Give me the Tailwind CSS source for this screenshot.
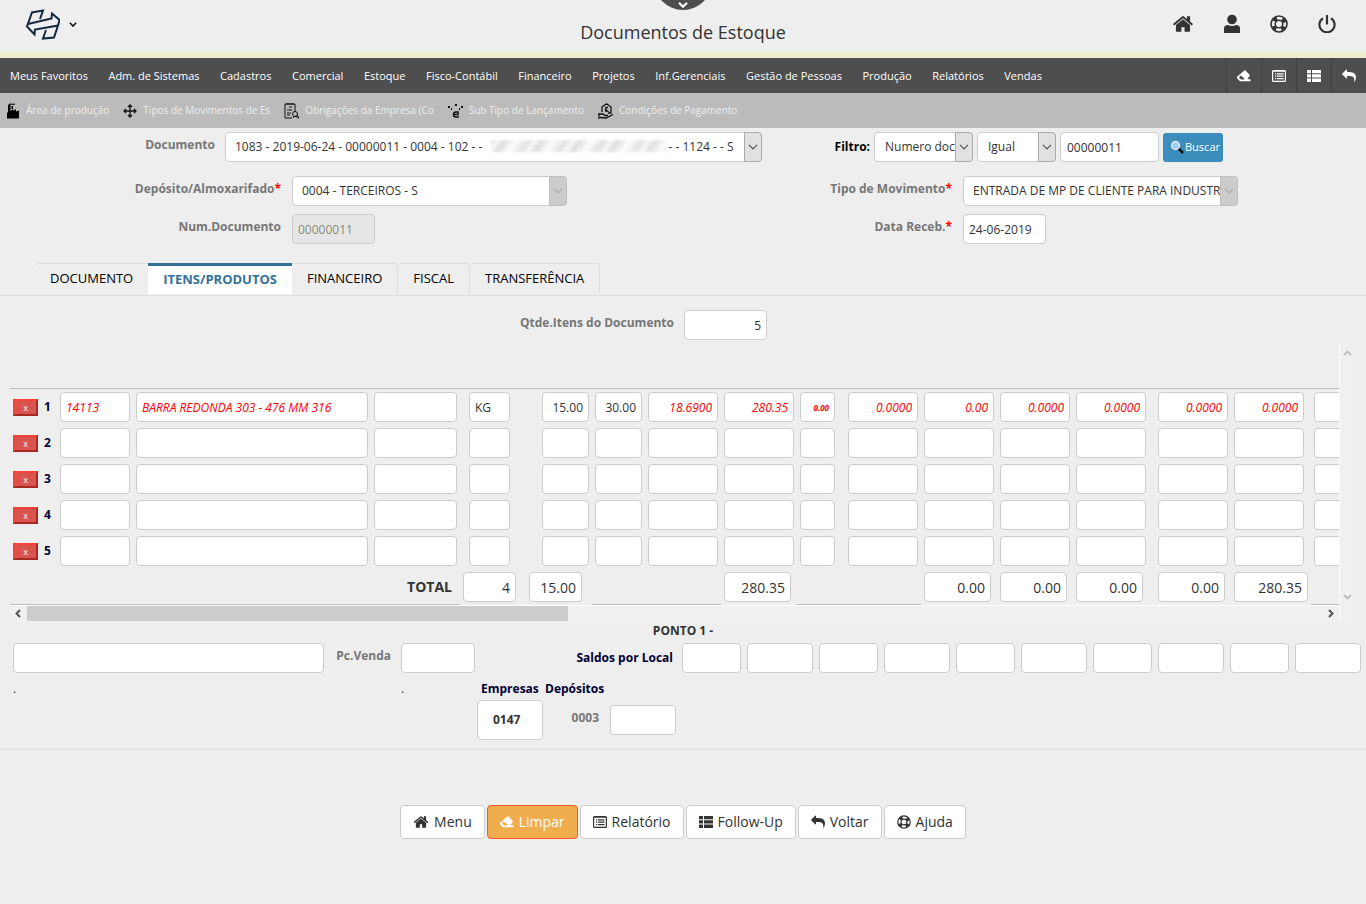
<!DOCTYPE html>
<html lang="pt-BR">
    <head>
        <meta charset="UTF-8" />
        <meta name="viewport" content="width=device-width, initial-scale=1" />
        <title>Documentos de Estoque</title>
        <script src="https://cdn.jsdelivr.net/npm/@tailwindcss/browser@4"></script>
    </head>
    <body class="min-h-screen overflow-x-hidden bg-[#eeeeee] font-['Open_Sans',sans-serif] text-xs text-[#333]">
        <!-- Icon sprite -->
        <svg class="hidden">
            <symbol id="i-home" viewBox="0 0 1792 1792">
                <path d="M1472 992v480q0 26-19 45t-45 19h-384v-384h-256v384h-384q-26 0-45-19t-19-45v-480q0-1 .5-3t.5-3l575-474 575 474q1 2 1 6zm223-69l-62 74q-8 9-21 11h-3q-13 0-21-7l-692-577-692 577q-12 8-24 7-13-2-21-11l-62-74q-8-10-7-23.5t11-21.5l719-599q32-26 76-26t76 26l244 204v-195q0-14 9-23t23-9h192q14 0 23 9t9 23v408l219 182q10 8 11 21.5t-7 23.5z" />
            </symbol>
            <symbol id="i-user" viewBox="0 0 18 20">
                <circle cx="9" cy="5.500" r="4.800" />
                <path d="M1 19v-4.500q0-3.500 4-3.500 4 2 8 0 4 0 4 3.500v4.500z" />
            </symbol>
            <symbol id="i-ring" viewBox="0 0 18 18">
                <g fill="none" stroke="currentColor">
                    <circle cx="9" cy="9" r="8" stroke-width="1.600" />
                    <circle cx="9" cy="9" r="3.800" stroke-width="1.500" />
                    <circle cx="9" cy="9" r="6" stroke-width="4" stroke-dasharray="4 5.425" stroke-dashoffset="-2.710" />
                </g>
            </symbol>
            <symbol id="i-power" viewBox="0 0 18 18">
                <path d="M5 3.200a7.600 7.600 0 1 0 8 0M9 0v9.500" fill="none" stroke="currentColor" stroke-width="2.200" />
            </symbol>
            <symbol id="i-eraser" viewBox="0 0 14 12">
                <path fill-rule="evenodd" d="M8 0l5 5.200-2.700 4H13.500v2H3L0 8.200V6.800zM3.600 5.600L2 7.500l2 1.900h3L7.600 8.600z" />
            </symbol>
            <symbol id="i-form" viewBox="0 0 14 12">
                <path fill-rule="evenodd" d="M1.500 0h11Q14 0 14 1.500v9q0 1.500-1.500 1.500h-11Q0 12 0 10.500v-9Q0 0 1.500 0zM1.200 1.800v9h11.600v-9z" />
                <path d="M3 3.200h1.200v1.200H3zM5 3.200h6.500v1.200H5zM3 5.600h1.200v1.200H3zM5 5.600h6.500v1.200H5zM3 8h1.200v1.200H3zM5 8h6.500v1.200H5z" />
            </symbol>
            <symbol id="i-list" viewBox="0 0 14 12">
                <path d="M0 0h4v3.300H0zM5 0h9v3.300H5zM0 4.300h4v3.300H0zM5 4.300h9v3.300H5zM0 8.600h4V12H0zM5 8.600h9V12H5z" />
            </symbol>
            <symbol id="i-reply" viewBox="0 0 1792 1792">
                <path d="M1792 1120q0 166-127 451-3 7-10.500 24t-13.500 30-13 22q-12 17-28 17-15 0-23.500-10t-8.500-25q0-9 2.500-26.500t2.500-23.500q5-68 5-123 0-101-17.500-181t-48.500-138.500-80-101-105.500-69.500-133-42.500-154-21.500-175.500-6h-224v256q0 26-19 45t-45 19-45-19l-512-512q-19-19-19-45t19-45l512-512q19-19 45-19t45 19 19 45v256h224q713 0 875 403 53 134 53 333z" />
            </symbol>
            <symbol id="i-down" viewBox="0 0 10 6">
                <path d="M1 .8l4 4 4-4" fill="none" stroke="currentColor" stroke-width="1.200" />
            </symbol>
        </svg>

        <header class="relative flex h-[58px] items-center justify-between border-b-6 border-[#eeeed0] pb-1">
            <button class="ml-[25px] flex items-center gap-[9px]" aria-label="Empresa">
                <svg class="h-8 w-[35px]" viewBox="0 0 35 32" fill="none" stroke="#14293d" stroke-width="2">
                    <path d="M15 11l3-8.500L7 4.500 2 18.500l7.500 8 .5-5 23-4L34.500 12 27 5.500l-.5 5L3 16M33 17.500l-4 12-11 1L21 22" />
                </svg>
                <svg class="h-[5px] w-2 text-black" viewBox="0 0 8 5"><path d="M.8.800L4 4 7.200.800" fill="none" stroke="currentColor" stroke-width="1.500" /></svg>
            </button>
            <button class="absolute -top-12 left-1/2 size-[58px] -translate-x-1/2 rounded-full bg-[#4e4e4e]" aria-label="Mostrar">
                <svg class="mx-auto mt-12 h-[6px] w-[10px] text-white" viewBox="0 0 10 6"><path d="M1 .800l4 4 4-4" fill="none" stroke="currentColor" stroke-width="2" /></svg>
            </button>
            <h1 class="absolute inset-x-0 top-5 text-center text-lg/6">Documentos de Estoque</h1>
            <nav class="mr-[30px] flex items-center gap-7" aria-label="Atalhos">
                <a href="#" aria-label="Menu"><svg class="size-[22px]" fill="currentColor"><use href="#i-home" /></svg></a>
                <a href="#" aria-label="Usuário"><svg class="size-5" fill="currentColor"><use href="#i-user" /></svg></a>
                <a href="#" aria-label="Ajuda"><svg class="size-[18px]" fill="currentColor"><use href="#i-ring" /></svg></a>
                <a href="#" aria-label="Sair" class="ml-[2px]"><svg class="size-[18px]" fill="currentColor"><use href="#i-power" /></svg></a>
            </nav>
        </header>

        <nav class="flex h-[35px] items-center justify-between bg-[#4e4e4e] text-white" aria-label="Principal">
            <div class="ml-[10px] flex w-[1032px] justify-between pt-[2px] text-[11px] whitespace-nowrap">
                <a href="#">Meus Favoritos</a>
                <a href="#">Adm. de Sistemas</a>
                <a href="#">Cadastros</a>
                <a href="#">Comercial</a>
                <a href="#">Estoque</a>
                <a href="#">Fisco-Contábil</a>
                <a href="#">Financeiro</a>
                <a href="#">Projetos</a>
                <a href="#">Inf.Gerenciais</a>
                <a href="#">Gestão de Pessoas</a>
                <a href="#">Produção</a>
                <a href="#">Relatórios</a>
                <a href="#">Vendas</a>
            </div>
            <div class="flex h-full">
                <button class="flex w-[35px] items-center justify-center border-l border-[#404040]" aria-label="Limpar"><svg class="h-3 w-[14px]" fill="currentColor"><use href="#i-eraser" /></svg></button>
                <button class="flex w-[35px] items-center justify-center border-l border-[#404040]" aria-label="Relatório"><svg class="h-3 w-[14px]" fill="currentColor"><use href="#i-form" /></svg></button>
                <button class="flex w-[35px] items-center justify-center border-l border-[#404040]" aria-label="Follow-Up"><svg class="h-3 w-[14px]" fill="currentColor"><use href="#i-list" /></svg></button>
                <button class="flex w-[35px] items-center justify-center border-l border-[#404040]" aria-label="Voltar"><svg class="size-[14px]" fill="currentColor"><use href="#i-reply" /></svg></button>
            </div>
        </nav>

        <nav class="flex h-[35px] items-center gap-[14px] bg-[#bbb] pl-[6px] text-[10px] whitespace-nowrap text-[#eee]" aria-label="Favoritos">
            <a href="#" class="flex items-center gap-[6px]">
                <svg class="h-4 w-[14px]" viewBox="0 0 14 16" fill="#000"><path d="M1 15.500V9.500h1V2h2.500v6l3-2v2l2.500-2v2.500l3-1v8zM2 1.500Q4 0 6 .8h3v1H4z" /><path d="M5.500 3H7v3H5.500z" /></svg>
                Área de produção
            </a>
            <a href="#" class="flex items-center gap-[6px]">
                <svg class="size-[14px]" viewBox="0 0 14 14" fill="none" stroke="#111" stroke-width="1.300"><path d="M7 1v12M1 7h12M5 3l2-2 2 2M5 11l2 2 2-2M3 5L1 7l2 2M11 5l2 2-2 2" /></svg>
                Tipos de Movimentos de Es
            </a>
            <a href="#" class="flex items-center gap-[5px]">
                <svg class="size-4" viewBox="0 0 16 16" fill="none" stroke="#111"><path d="M1 1h10v8M1 1v14h7M3 0v2M5 0v2M7 0v2M9 0v2M3 7h5M3 10h4M3 12h3" /><circle cx="11" cy="11" r="2.500" /><path d="M9 15l2-2 4 2M13 12l2 3M5 4h3" /></svg>
                Obrigações da Empresa (Co
            </a>
            <a href="#" class="flex items-center gap-[5px]">
                <svg class="size-4" viewBox="0 0 16 16" fill="#111"><path d="M0 3h2v2H0zM3 5h1v2H3zM7 1h2v2H7zM11 5h1v2h-1zM13 3h2v2h-2z" /><path d="M11 14H8q-2.500 0-2.500-2.500T8 9h2v2.500H6" fill="none" stroke="#111" stroke-width="1.500" /></svg>
                Sub Tipo de Lançamento
            </a>
            <a href="#" class="flex items-center gap-[5px]">
                <svg class="size-4" viewBox="0 0 16 16" fill="none" stroke="#111" stroke-width="1.300"><path d="M4 9V4l4.500-3.200L13 4v6h-3M10 4.500H8L7.500 6.500 9.500 8H7M1 10v6M1 11h4l2 1.500h3M2 14.500l6 .5 7-3.500" /></svg>
                Condições de Pagamento
            </a>
        </nav>

        <main>
            <form class="pt-1" onsubmit="return false">
                <!-- Document search -->
                <div class="flex h-[30px] items-center justify-between pr-[143px]">
                    <div class="flex items-center gap-[10px]">
                        <label for="documento" class="w-[215px] pb-1 text-right font-bold text-[#777]">Documento</label>
                        <div class="relative">
                            <select id="documento" class="h-[30px] w-[537px] appearance-none rounded-sm border border-[#ccc] bg-white pl-[9px]">
                                <option>1083 - 2019-06-24 - 00000011 - 0004 - 102 - -&emsp;&emsp;&emsp;&emsp;&emsp;&emsp;&emsp;&emsp;&emsp;&emsp;&emsp;&emsp;&emsp;&emsp;&emsp;&nbsp; - - 1124 - - S</option>
                            </select>
                            <span class="pointer-events-none absolute top-2 left-[266px] h-3 w-[176px] bg-[repeating-linear-gradient(125deg,#e2e2e2_0px,#f8f8f8_6px,#dedede_11px,#fdfdfd_21px,#e8e8e8_29px,#e2e2e2_31px)] blur-[1px]"></span>
                            <span class="pointer-events-none absolute inset-y-0 right-0 flex w-[18px] items-center justify-center rounded-r-sm border border-[#aaa] bg-[#e1e1e1] text-[#555]"><svg class="h-[6px] w-[10px]"><use href="#i-down" /></svg></span>
                        </div>
                    </div>
                    <div class="flex items-center gap-1">
                        <label for="filtro" class="font-bold text-black">Filtro:</label>
                        <div class="relative">
                            <select id="filtro" class="h-[30px] w-[99px] appearance-none rounded-sm border border-[#ccc] bg-white pl-[10px]"><option>Numero documento</option></select>
                            <span class="pointer-events-none absolute inset-y-0 right-0 flex w-[18px] items-center justify-center rounded-r-sm border border-[#aaa] bg-[#e1e1e1] text-[#555]"><svg class="h-[6px] w-[10px]"><use href="#i-down" /></svg></span>
                        </div>
                        <div class="relative">
                            <select aria-label="Operador" class="h-[30px] w-[79px] appearance-none rounded-sm border border-[#ccc] bg-white pl-[10px]"><option>Igual</option></select>
                            <span class="pointer-events-none absolute inset-y-0 right-0 flex w-[18px] items-center justify-center rounded-r-sm border border-[#aaa] bg-[#e1e1e1] text-[#555]"><svg class="h-[6px] w-[10px]"><use href="#i-down" /></svg></span>
                        </div>
                        <input aria-label="Valor" value="00000011" class="h-[30px] w-[99px] rounded-sm border border-[#ccc] bg-white px-[6px]" />
                        <button class="flex h-[29px] w-[60px] items-center justify-end gap-px rounded-[3px] bg-[#3c8dbc] pr-[3px] text-[11px] text-white">
                            <svg class="size-[14px]" viewBox="0 0 14 14"><path d="M8 8l5 5" stroke="#111" stroke-width="2.500" /><circle cx="5.500" cy="5.500" r="4" fill="#9fd0f5" stroke="#dbe9f5" stroke-width="1.500" /></svg>
                            Buscar
                        </button>
                    </div>
                </div>

                <div class="mt-[14px] grid grid-cols-2 gap-y-2">
                    <div class="flex items-center gap-[11px]">
                        <label for="deposito" class="w-[281px] pb-1 text-right font-bold text-[#777]">Depósito/Almoxarifado<span class="text-[#f00]">*</span></label>
                        <div class="relative">
                            <select id="deposito" class="h-[30px] w-[275px] appearance-none rounded-sm border border-[#ccc] bg-white pl-[9px]"><option>0004 - TERCEIROS - S</option></select>
                            <span class="pointer-events-none absolute inset-y-0 right-0 flex w-[18px] items-center justify-center rounded-r-sm border border-[#bfbfbf] bg-[#ccc] text-[#aaa]"><svg class="h-[6px] w-[10px]"><use href="#i-down" /></svg></span>
                        </div>
                    </div>
                    <div class="flex items-center gap-[11px]">
                        <label for="tipo" class="w-[269px] pb-1 text-right font-bold text-[#777]">Tipo de Movimento<span class="text-[#f00]">*</span></label>
                        <div class="relative">
                            <select id="tipo" class="h-[30px] w-[275px] appearance-none rounded-sm border border-[#ccc] bg-white pl-[9px]"><option>ENTRADA DE MP DE CLIENTE PARA INDUSTRIALIZAÇÃO</option></select>
                            <span class="pointer-events-none absolute inset-y-0 right-0 flex w-[18px] items-center justify-center rounded-r-sm border border-[#bfbfbf] bg-[#ccc] text-[#aaa]"><svg class="h-[6px] w-[10px]"><use href="#i-down" /></svg></span>
                        </div>
                    </div>
                    <div class="flex items-center gap-[11px]">
                        <label for="numero" class="w-[281px] pb-1 text-right font-bold text-[#777]">Num.Documento</label>
                        <input id="numero" value="00000011" disabled class="h-[30px] w-[83px] rounded-sm border border-[#ccc] bg-[#e6e6e6] px-[5px] text-[#8a8a7c]" />
                    </div>
                    <div class="flex items-center gap-[11px]">
                        <label for="data" class="w-[269px] pb-1 text-right font-bold text-[#777]">Data Receb.<span class="text-[#f00]">*</span></label>
                        <input id="data" value="24-06-2019" class="h-[30px] w-[83px] rounded-sm border border-[#ccc] bg-white px-[5px]" />
                    </div>
                </div>

                <!-- Tabs -->
                <div role="tablist" class="mt-[19px] flex h-[33px] border-b border-[#ddd] pb-px pl-[35px] text-[13px] text-black">
                    <button type="button" role="tab" class="rounded-tl-sm border-t border-[#ddd] px-[15px]">DOCUMENTO</button>
                    <button type="button" role="tab" aria-selected="true" class="border-t-3 border-[#337199] bg-white px-[15px] font-bold text-[#337199]">ITENS/PRODUTOS</button>
                    <button type="button" role="tab" class="rounded-tr-sm border-t border-r border-[#ddd] px-[15px]">FINANCEIRO</button>
                    <button type="button" role="tab" class="rounded-t-sm border-t border-r border-[#ddd] px-[15px]">FISCAL</button>
                    <button type="button" role="tab" class="rounded-t-sm border-t border-r border-[#ddd] px-[15px]">TRANSFERÊNCIA</button>
                </div>

                <div class="mt-[14px] flex items-center gap-[10px]">
                    <label for="qtde" class="w-[674px] pb-1 text-right font-bold text-[#777]">Qtde.Itens do Documento</label>
                    <input id="qtde" value="5" class="h-[30px] w-[83px] rounded-sm border border-[#ccc] bg-white px-[5px] text-right" />
                </div>

                <!-- Items grid with its scrollbars -->
                <div class="mx-[10px] mt-1 flex">
                    <div class="min-w-0 flex-1">
                        <div class="overflow-hidden">
                            <table class="w-[1392px] table-fixed border-separate border-spacing-0">
                                <colgroup>
                                    <col class="w-[47px]" />
                                    <col class="w-[76px]" />
                                    <col class="w-[238px]" />
                                    <col class="w-[89px]" />
                                    <col class="w-[66px]" />
                                    <col class="w-[66px]" />
                                    <col class="w-[53px]" />
                                    <col class="w-[76px]" />
                                    <col class="w-[76px]" />
                                    <col class="w-[48px]" />
                                    <col class="w-[76px]" />
                                    <col class="w-[76px]" />
                                    <col class="w-[76px]" />
                                    <col class="w-[82px]" />
                                    <col class="w-[76px]" />
                                    <col class="w-[80px]" />
                                    <col class="w-[91px]" />
                                </colgroup>
                                <thead>
                                    <tr class="h-[45px]"><td colspan="17" class="border-b border-[#bbb] p-0"></td></tr>
                                </thead>
                                <tbody id="itens"></tbody>
                                <tfoot>
                                    <tr id="totais" class="h-9"></tr>
                                </tfoot>
                            </table>
                        </div>
                        <div class="flex h-[17px] items-start border-t border-white bg-[#f0f0f0] text-[#555]">
                            <svg class="h-[15px] w-[17px]" viewBox="0 0 17 15"><path d="M10 4L6.500 7.500 10 11" fill="none" stroke="currentColor" stroke-width="2" /></svg>
                            <div class="h-[15px] w-[541px] bg-[#ccc]"></div>
                            <svg class="ml-auto h-[15px] w-[17px]" viewBox="0 0 17 15"><path d="M7 4l3.500 3.500L7 11" fill="none" stroke="currentColor" stroke-width="2" /></svg>
                        </div>
                    </div>
                    <div class="flex w-[17px] flex-col justify-between border-l border-white bg-[#f0f0f0] pt-[6px] pb-[22px] pl-[3px] text-[#bbb]">
                        <svg class="h-[6px] w-[9px]" viewBox="0 0 9 6"><path d="M1 5l3.500-3.500L8 5" fill="none" stroke="currentColor" stroke-width="1.800" /></svg>
                        <svg class="h-[6px] w-[9px]" viewBox="0 0 9 6"><path d="M1 1l3.500 3.500L8 1" fill="none" stroke="currentColor" stroke-width="1.800" /></svg>
                    </div>
                </div>

                <p class="text-center leading-[18px] font-bold">PONTO 1 -</p>

                <!-- Price and balances -->
                <div class="mt-[3px] flex items-center justify-between pr-[5px] pl-[13px]">
                    <div class="flex items-center">
                        <input aria-label="Descrição" class="h-[30px] w-[311px] rounded-sm border border-[#ccc] bg-white px-[5px]" />
                        <label for="pcvenda" class="w-[67px] pb-1 text-right font-bold text-[#777]">Pc.Venda</label>
                        <input id="pcvenda" class="ml-[10px] h-[30px] w-[74px] rounded-sm border border-[#ccc] bg-white px-[5px]" />
                    </div>
                    <div class="flex items-center gap-[6px]">
                        <label for="saldo1" class="mr-[3px] font-bold text-[#003]">Saldos por Local</label>
                        <input id="saldo1" class="h-[30px] w-[59px] rounded-sm border border-[#ccc] bg-white" />
                        <input aria-label="Saldo 2" class="h-[30px] w-[66px] rounded-sm border border-[#ccc] bg-white" />
                        <input aria-label="Saldo 3" class="h-[30px] w-[59px] rounded-sm border border-[#ccc] bg-white" />
                        <input aria-label="Saldo 4" class="h-[30px] w-[66px] rounded-sm border border-[#ccc] bg-white" />
                        <input aria-label="Saldo 5" class="h-[30px] w-[59px] rounded-sm border border-[#ccc] bg-white" />
                        <input aria-label="Saldo 6" class="h-[30px] w-[66px] rounded-sm border border-[#ccc] bg-white" />
                        <input aria-label="Saldo 7" class="h-[30px] w-[59px] rounded-sm border border-[#ccc] bg-white" />
                        <input aria-label="Saldo 8" class="h-[30px] w-[66px] rounded-sm border border-[#ccc] bg-white" />
                        <input aria-label="Saldo 9" class="h-[30px] w-[59px] rounded-sm border border-[#ccc] bg-white" />
                        <input aria-label="Saldo 10" class="h-[30px] w-[66px] rounded-sm border border-[#ccc] bg-white" />
                    </div>
                </div>

                <div class="mt-[7px] flex pl-[13px] leading-[18px]">
                    <span class="w-[388px]">.</span>
                    <span class="w-20">.</span>
                    <span class="w-16 font-bold text-[#003]">Empresas</span>
                    <span class="font-bold text-[#003]">Depósitos</span>
                </div>
                <div class="mt-[2px] flex items-center border-b border-[#ddd] pb-[9px] pl-[477px] font-bold">
                    <div class="flex h-10 w-[66px] items-center rounded-sm border border-[#ccc] bg-white pl-[15px]">0147</div>
                    <label for="dep0003" class="w-14 pb-1 text-right text-[#777]">0003</label>
                    <input id="dep0003" class="ml-[11px] h-[30px] w-[66px] rounded-sm border border-[#ccc] bg-white px-[5px]" />
                </div>

                <div class="mt-[55px] flex justify-center gap-[2px] pb-8 text-sm">
                    <button class="flex h-[34px] items-center gap-[5px] rounded-sm border border-[#ccc] bg-white px-3"><svg class="size-4" fill="currentColor"><use href="#i-home" /></svg>Menu</button>
                    <button class="flex h-[34px] items-center gap-[5px] rounded-sm border border-[#ff5722] bg-[#f0ad4e] px-3 text-white"><svg class="h-3 w-[14px]" fill="currentColor"><use href="#i-eraser" /></svg>Limpar</button>
                    <button class="flex h-[34px] items-center gap-[5px] rounded-sm border border-[#ccc] bg-white px-3"><svg class="h-3 w-[14px]" fill="currentColor"><use href="#i-form" /></svg>Relatório</button>
                    <button class="flex h-[34px] items-center gap-[5px] rounded-sm border border-[#ccc] bg-white px-3"><svg class="h-3 w-[14px]" fill="currentColor"><use href="#i-list" /></svg>Follow-Up</button>
                    <button class="flex h-[34px] items-center gap-[5px] rounded-sm border border-[#ccc] bg-white px-3"><svg class="size-[14px]" fill="currentColor"><use href="#i-reply" /></svg>Voltar</button>
                    <button class="flex h-[34px] items-center gap-[5px] rounded-sm border border-[#ccc] bg-white px-3"><svg class="size-[14px]" fill="currentColor"><use href="#i-ring" /></svg>Ajuda</button>
                </div>
            </form>
        </main>

        <script>
            const calc = "text-right italic text-[#f00]";
            // name, value of row 1, cell classes, input classes
            const columns = [
                ["Produto", "14113", "pl-[3px]", "w-[70px] italic text-[#f00]"],
                ["Descrição", "BARRA REDONDA 303 - 476 MM 316", "pl-[3px]", "w-[232px] italic text-[#f00]"],
                ["Complemento", "", "pl-[3px]", "w-[83px]"],
                ["Unidade", "KG", "pl-[9px]", "w-[41px]"],
                ["Quantidade", "15.00", "pl-4", "w-[47px] text-right"],
                ["Saldo", "30.00", "pl-[3px]", "w-[47px] text-right"],
                ["Preço", "18.6900", "pl-[3px]", "w-[70px] " + calc],
                ["Valor", "280.35", "pl-[3px]", "w-[70px] " + calc],
                ["Desconto", "0.00", "pl-[3px]", "w-[35px] text-[8px] font-bold " + calc],
                ["IPI", "0.0000", "pl-[3px]", "w-[70px] " + calc],
                ["Valor IPI", "0.00", "pl-[3px]", "w-[70px] " + calc],
                ["ICMS", "0.0000", "pl-[3px]", "w-[70px] " + calc],
                ["Valor ICMS", "0.0000", "pl-[3px]", "w-[70px] " + calc],
                ["Frete", "0.0000", "pl-[3px]", "w-[70px] " + calc],
                ["Total", "0.0000", "pl-[3px]", "w-[70px] " + calc],
                ["Conta", "", "pl-[3px]", "w-[70px]"],
            ];

            let rows = "";
            for (let i = 1; i <= 5; i++) {
                const cells = columns.map(([name, value, cell, input]) =>
                    `<td class="p-0 ${cell}"><input aria-label="${name} ${i}" value="${i === 1 ? value : ""}" class="block h-[30px] rounded-sm border border-[#ccc] bg-white px-[5px] ${input}"></td>`
                );
                rows += `<tr class="h-9">
                    <td class="p-0 pl-[3px]"><div class="flex items-center gap-[6px] font-bold text-[#003]"><button type="button" aria-label="Excluir item ${i}" class="h-[17px] w-[25px] border-2 border-t-[#f44336] border-r-[#a52a24] border-b-[#a52a24] border-l-[#f44336] bg-[#d9534f] text-[9px] leading-[13px] font-normal text-white">x</button>${i}</div></td>
                    ${cells.join("")}
                </tr>`;
            }
            document.getElementById("itens").innerHTML = rows;

            const totals = [
                ["4", "w-[53px]"],
                ["15.00", "w-[53px]"],
                null,
                null,
                ["280.35", "w-[67px]"],
                null,
                null,
                ["0.00", "w-[67px]"],
                ["0.00", "w-[67px]"],
                ["0.00", "w-[67px]"],
                ["0.00", "w-[67px]"],
                ["280.35", "w-[74px]"],
                null,
            ];
            document.getElementById("totais").innerHTML =
                `<th colspan="4" class="border-b border-[#bbb] p-0 pr-2 text-right text-sm font-bold">TOTAL</th>` +
                totals.map((t) =>
                    t
                        ? `<td class="p-0 pl-[3px]"><input aria-label="Total" readonly value="${t[0]}" class="block h-[30px] rounded-sm border border-[#ccc] bg-white px-[5px] text-right text-sm ${t[1]}"></td>`
                        : `<td class="border-b border-[#bbb] p-0"></td>`
                ).join("");
        </script>
    </body>
</html>
